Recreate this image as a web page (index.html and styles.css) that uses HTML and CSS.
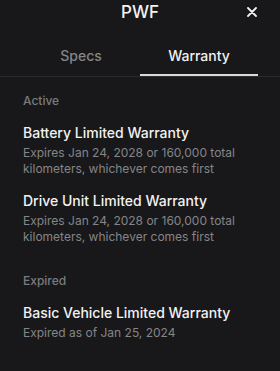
FILE: index.html
```html
<html lang="en">
<head>
    <meta charset="UTF-8">
    <meta name="viewport" content="width=device-width, initial-scale=1.0">
    <title>PWF</title>
    <link rel="stylesheet" href="styles.css">
</head>
<body>
    <div class="sheet">
        <div class="header">
            <span></span>
            <h1 class="title">PWF</h1>
            <button type="button" class="close" aria-label="Close">
                <svg width="10" height="10" viewBox="0 0 10 10">
                    <path d="M1 1L9 9M9 1L1 9" stroke="#f2f2f2" stroke-width="1.8" stroke-linecap="round"/>
                </svg>
            </button>
        </div>
        <div class="tabs">
            <a href="#" class="tab">Specs</a>
            <a href="#" class="tab is-active">Warranty</a>
        </div>
        <div class="section">
            <div class="section-label">Active</div>
            <div class="item">
                <div class="item-title">Battery Limited Warranty</div>
                <div class="item-text">Expires Jan 24, 2028 or 160,000 total<br>kilometers, whichever comes first</div>
            </div>
            <div class="item">
                <div class="item-title">Drive Unit Limited Warranty</div>
                <div class="item-text">Expires Jan 24, 2028 or 160,000 total<br>kilometers, whichever comes first</div>
            </div>
        </div>
        <div class="section is-last">
            <div class="section-label">Expired</div>
            <div class="item">
                <div class="item-title">Basic Vehicle Limited Warranty</div>
                <div class="item-text">Expired as of Jan 25, 2024</div>
            </div>
        </div>
    </div>
</body>
</html>
```

FILE: styles.css
```css
html,body {
    height: 100%;
}
body {
    margin: 0;
    background: #18181a;
    font-family: Inter, "Noto Sans", sans-serif;
    color: #ededed;
}
.sheet {
    display: flex;
    flex-direction: column;
}
.header {
    height: 23px;
    padding: 0 23px;
    display: grid;
    grid-template-columns: 1fr auto 1fr;
    align-items: center;
}
.title {
    margin: 0;
    font-size: 17px;
    font-weight: 500;
    line-height: 20px;
    color: #f2f2f2;
}
.close {
    justify-self: end;
    background: none;
    border: none;
    padding: 0;
    width: 10px;
    height: 10px;
    margin-top: 1px;
    display: flex;
    align-items: center;
    justify-content: center;
}
.tabs {
    margin-top: 13px;
    padding: 0 22px;
    display: grid;
    grid-template-columns: 1fr 1fr;
    border-bottom: 1px solid #2b2b2e;
}
.tab {
    height: 38px;
    display: flex;
    align-items: center;
    justify-content: center;
    text-decoration: none;
    font-size: 14px;
    font-weight: 500;
    color: #858587;
    border-bottom: 2px solid transparent;
}
.tab.is-active {
    color: #f0f0f0;
    border-bottom-color: #d9d9d9;
}
.section {
    padding: 16px 23px 0 23px;
    display: flex;
    flex-direction: column;
    gap: 15px;
}
.section.is-last {
    padding-top: 28px;
}
.section-label {
    font-size: 12px;
    line-height: 16px;
    font-weight: 500;
    color: #7b7b7e;
}
.item-title {
    font-size: 14px;
    line-height: 18px;
    font-weight: 500;
    color: #f2f2f2;
    margin-bottom: 3px;
}
.item-text {
    font-size: 12px;
    line-height: 16px;
    color: #858588;
}
```
